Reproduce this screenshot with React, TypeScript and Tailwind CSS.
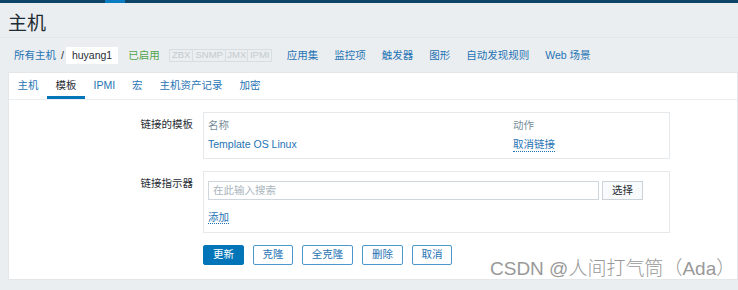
import * as React from "react"

const font = "font-['Liberation_Sans','Noto_Sans_CJK_SC',sans-serif]"

const navLinks = ["应用集", "监控项", "触发器", "图形", "自动发现规则", "Web 场景"]
const tabs = ["主机", "模板", "IPMI", "宏", "主机资产记录", "加密"]
const badges = [
  { label: "ZBX", w: "w-[24px]" },
  { label: "SNMP", w: "w-[33px]" },
  { label: "JMX", w: "w-[22px]" },
  { label: "IPMI", w: "w-[24px]" },
]
const actions = [
  { label: "克隆", w: "w-[40px]" },
  { label: "全克隆", w: "w-[51px]" },
  { label: "删除", w: "w-[41px]" },
  { label: "取消", w: "w-[40px]" },
]

function FormRow({ label, children }: { label: string; children: React.ReactNode }) {
  return (
    <div className="flex">
      <div className="w-[185px] shrink-0 pr-px pt-[5px] text-right leading-[14px]">{label}</div>
      <div className="ml-[9px] w-[467px] border border-[#e6e9eb]">{children}</div>
    </div>
  )
}

export default function App() {
  return (
    <div
      className={`relative h-[290px] w-[738px] overflow-hidden bg-[#ebeef0] text-[10.5px] text-[#1f2c33] ${font}`}
    >
      <div className="flex h-[3px] bg-[#0e4468]">
        <div className="ml-[105px] w-[20px] bg-[#0a7cc1]" />
      </div>

      <div className="h-[35px] border-b border-[#e3e7ea] pl-2 pt-[10px]">
        <h1 className="text-[19px] leading-[22px] text-[#1f2c33]">主机</h1>
      </div>

      <div className="flex h-[34px] items-center pl-[14px] leading-[14px]">
        <span className="text-[#1f73b4]">所有主机</span>
        <span className="ml-[5px] text-[#1f2c33]">/</span>
        <span className="ml-[2px] flex h-[17px] items-center bg-white px-[6px]">huyang1</span>
        <span className="ml-[10px] text-[#4fa34a]">已启用</span>
        <div className="ml-[9.5px] flex h-[13px]">
          {badges.map((b, i) => (
            <span
              key={b.label}
              className={`flex ${b.w} items-center justify-center border border-[#d7dde1] text-[9.5px] text-[#c3cacf] ${
                i > 0 ? "border-l-0" : ""
              }`}
            >
              {b.label}
            </span>
          ))}
        </div>
        <div className="ml-[14.5px] flex gap-[16px] text-[#1f73b4]">
          {navLinks.map((l) => (
            <span key={l}>{l}</span>
          ))}
        </div>
      </div>

      <div className="ml-2 h-[208px] border border-[#e3e7ea] bg-white">
        <div className="flex h-[27px] border-b border-[#ebeef0]">
          {tabs.map((t) => (
            <span
              key={t}
              className={`flex items-center border-b-[3px] px-[8.5px] leading-[14px] ${
                t === "模板"
                  ? "border-[#0275b8] text-[#1f2c33]"
                  : "border-transparent text-[#1f73b4]"
              }`}
            >
              {t}
            </span>
          ))}
        </div>

        <div className="mt-[12px] flex flex-col gap-[12px]">
          <FormRow label="链接的模板">
            <div className="pb-[4px] pl-[4px] pt-[3px] leading-[19px]">
              <div className="flex text-[#768d99]">
                <span className="w-[305px]">名称</span>
                <span>动作</span>
              </div>
              <div className="flex text-[#1f73b4]">
                <span className="w-[305px]">Template OS Linux</span>
                <span>
                  <span className="border-b border-dotted border-[#1f73b4] pb-px">取消链接</span>
                </span>
              </div>
            </div>
          </FormRow>

          <FormRow label="链接指示器">
            <div className="pb-[8px] pl-[4px] pt-[9px]">
              <div className="flex">
                <div className="flex h-[19px] w-[391px] items-center border border-[#cfd7dc] pl-[4px] text-[#a9b5bc]">
                  在此输入搜索
                </div>
                <button className="ml-[3px] flex h-[19px] w-[41px] items-center justify-center border border-[#cbd3d8] bg-[#f9fafb] text-[#1f2c33]">
                  选择
                </button>
              </div>
              <div className="mt-[10px] leading-[14px]">
                <span className="border-b border-dotted border-[#1f73b4] text-[#1f73b4]">添加</span>
              </div>
            </div>
          </FormRow>

          <div className="ml-[194px] flex gap-[9px]">
            <button className="flex h-[20px] w-[41px] items-center justify-center rounded-[2px] border border-[#0275b8] bg-[#0275b8] text-white">
              更新
            </button>
            {actions.map((a) => (
              <button
                key={a.label}
                className={`flex h-[20px] ${a.w} items-center justify-center rounded-[2px] border border-[#4a98cd] bg-white text-[#1f73b4]`}
              >
                {a.label}
              </button>
            ))}
          </div>
        </div>
      </div>

      <div className="absolute left-[490px] top-[257px] whitespace-nowrap text-[19px] font-light leading-[24px] text-[#999999]">
        CSDN @人间打气筒（Ada）
      </div>
    </div>
  )
}
